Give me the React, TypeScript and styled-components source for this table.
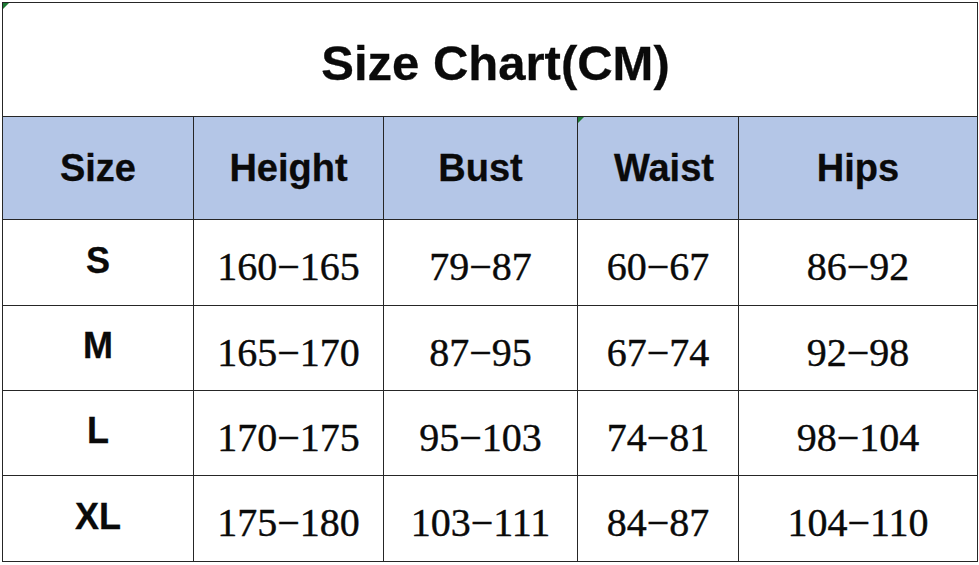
import styled, { createGlobalStyle } from 'styled-components';

const GlobalStyle = createGlobalStyle`
  html, body {
    margin: 0;
    padding: 0;
    background: #ffffff;
  }
`;

const rows = [
  { size: 'S', height: '160−165', bust: '79−87', waist: '60−67', hips: '86−92', h: 86 },
  { size: 'M', height: '165−170', bust: '87−95', waist: '67−74', hips: '92−98', h: 85 },
  { size: 'L', height: '170−175', bust: '95−103', waist: '74−81', hips: '98−104', h: 85 },
  { size: 'XL', height: '175−180', bust: '103−111', waist: '84−87', hips: '104−110', h: 86 },
];

const widths = [191, 190, 194, 161, 239];
const heads = ['Size', 'Height', 'Bust', 'Waist', 'Hips'];

const App = () => {
  return (
    <Page>
      <GlobalStyle />
      <Table>
        <colgroup>
          {widths.map((w, i) => (
            <col key={i} style={{ width: w }} />
          ))}
        </colgroup>
        <tbody>
          <TitleRow>
            <Title colSpan={5}>
              <Tick />
              Size Chart(CM)
            </Title>
          </TitleRow>
          <HeadRow>
            {heads.map((h) => (
              <Head key={h} $shift={h === 'Waist' ? 12 : 0}>
                {h === 'Waist' && <Tick />}
                {h}
              </Head>
            ))}
          </HeadRow>
          {rows.map((r) => (
            <DataRow key={r.size} $h={r.h}>
              <SizeCell>{r.size}</SizeCell>
              <Value>{r.height}</Value>
              <Value>{r.bust}</Value>
              <Value>{r.waist}</Value>
              <Value>{r.hips}</Value>
            </DataRow>
          ))}
        </tbody>
      </Table>
    </Page>
  );
};

export default App;

const Page = styled.div`
  width: 979px;
  height: 565px;
  padding: 2px;
  box-sizing: border-box;
`;
const Table = styled.table`
  width: 975px;
  table-layout: fixed;
  border-collapse: collapse;
  color: #0a0a0a;
  td, th {
    border: 1.5px solid #262626;
    padding: 0;
    text-align: center;
    vertical-align: middle;
    position: relative;
  }
`;
const TitleRow = styled.tr`
  height: 114px;
`;
const Title = styled.td`
  font-family: 'Liberation Sans', Arial, sans-serif;
  font-weight: 700;
  font-size: 49px;
  padding: 6px 0 0 11px !important;
  -webkit-text-stroke: 0.3px #0a0a0a;
`;
const HeadRow = styled.tr`
  height: 103px;
  background: #b4c6e7;
`;
const Head = styled.th<{ $shift: number }>`
  font-family: 'Liberation Sans', Arial, sans-serif;
  font-weight: 700;
  font-size: 38px;
  padding-left: ${(p) => p.$shift}px !important;
  -webkit-text-stroke: 0.3px #0a0a0a;
`;
const DataRow = styled.tr<{ $h: number }>`
  height: ${(p) => p.$h}px;
`;
const SizeCell = styled.td`
  font-family: 'Liberation Sans', Arial, sans-serif;
  font-weight: 700;
  font-size: 36px;
  padding-bottom: 4px !important;
  -webkit-text-stroke: 0.3px #0a0a0a;
`;
const Value = styled.td`
  font-family: 'Liberation Serif', 'Times New Roman', serif;
  font-size: 40px;
  padding-top: 8px !important;
  -webkit-text-stroke: 0.4px #0a0a0a;
`;
const Tick = styled.span`
  position: absolute;
  left: 0;
  top: 0;
  width: 0;
  height: 0;
  border-top: 6px solid #1e7b34;
  border-right: 6px solid transparent;
`;
